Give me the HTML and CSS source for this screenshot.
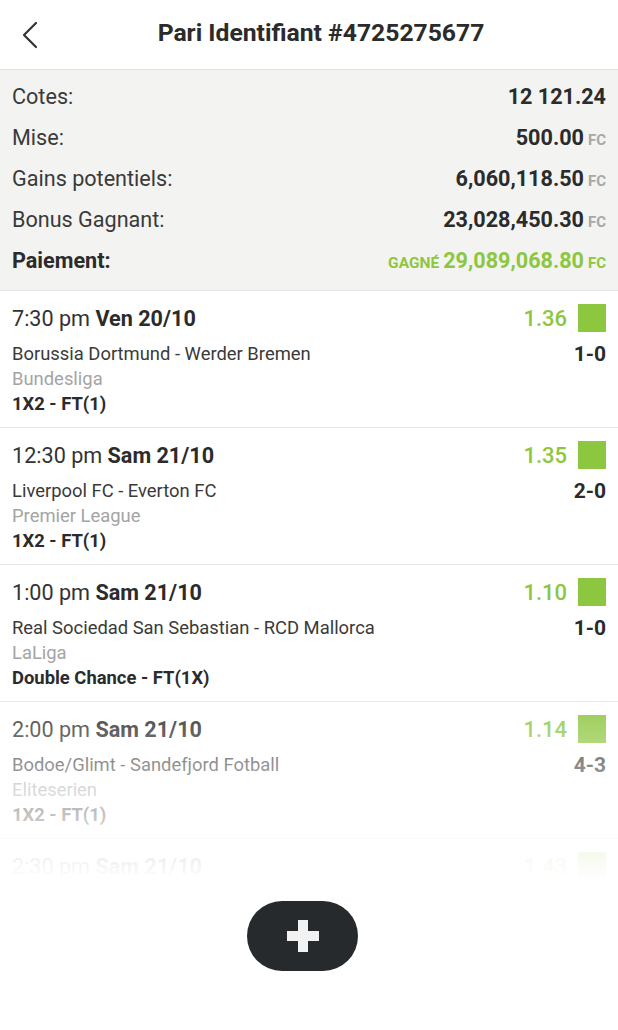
FILE: index.html
```html
<!DOCTYPE html>
<html lang="fr">
<head>
<meta charset="utf-8">
<title>Pari Identifiant</title>
<link rel="stylesheet" href="styles.css">
</head>
<body>
<div class="page">
  <header class="topbar">
    <button class="back" aria-label="Retour">
      <svg width="18" height="28" viewBox="0 0 18 28"><path d="M15 2 L3 14 L15 26" fill="none" stroke="#333" stroke-width="2.2" stroke-linecap="round" stroke-linejoin="round"/></svg>
    </button>
    <h1 class="title">Pari Identifiant #4725275677</h1>
  </header>

  <section class="summary">
    <div class="srow"><span class="slabel">Cotes:</span><span class="sval">12 121.24</span></div>
    <div class="srow"><span class="slabel">Mise:</span><span class="sval">500.00<span class="cur">FC</span></span></div>
    <div class="srow"><span class="slabel">Gains potentiels:</span><span class="sval">6,060,118.50<span class="cur">FC</span></span></div>
    <div class="srow"><span class="slabel">Bonus Gagnant:</span><span class="sval">23,028,450.30<span class="cur">FC</span></span></div>
    <div class="srow"><span class="slabel strong">Paiement:</span><span class="sval won"><span class="tag">GAGNÉ</span>29,089,068.80<span class="cur">FC</span></span></div>
  </section>

  <section class="list">
    <article class="bet">
      <div class="bet-top"><span class="when">7:30 pm <b>Ven 20/10</b></span><span class="odds">1.36<i class="dot"></i></span></div>
      <div class="line"><span class="teams">Borussia Dortmund - Werder Bremen</span><span class="score">1-0</span></div>
      <div class="line league">Bundesliga</div>
      <div class="line market">1X2 - FT(1)</div>
    </article>
    <article class="bet">
      <div class="bet-top"><span class="when">12:30 pm <b>Sam 21/10</b></span><span class="odds">1.35<i class="dot"></i></span></div>
      <div class="line"><span class="teams">Liverpool FC - Everton FC</span><span class="score">2-0</span></div>
      <div class="line league">Premier League</div>
      <div class="line market">1X2 - FT(1)</div>
    </article>
    <article class="bet">
      <div class="bet-top"><span class="when">1:00 pm <b>Sam 21/10</b></span><span class="odds">1.10<i class="dot"></i></span></div>
      <div class="line"><span class="teams">Real Sociedad San Sebastian - RCD Mallorca</span><span class="score">1-0</span></div>
      <div class="line league">LaLiga</div>
      <div class="line market">Double Chance - FT(1X)</div>
    </article>
    <article class="bet">
      <div class="bet-top"><span class="when">2:00 pm <b>Sam 21/10</b></span><span class="odds">1.14<i class="dot"></i></span></div>
      <div class="line"><span class="teams">Bodoe/Glimt - Sandefjord Fotball</span><span class="score">4-3</span></div>
      <div class="line league">Eliteserien</div>
      <div class="line market">1X2 - FT(1)</div>
    </article>
    <article class="bet last">
      <div class="bet-top"><span class="when">2:30 pm <b>Sam 21/10</b></span><span class="odds">1.43<i class="dot"></i></span></div>
    </article>
    <div class="fade"></div>
  </section>

  <footer class="foot">
    <button class="fab" aria-label="Ajouter">
      <svg width="32" height="32" viewBox="0 0 32 32"><rect x="11" y="0" width="10" height="32" fill="#f2f2f2"/><rect x="0" y="11" width="32" height="10" fill="#f2f2f2"/></svg>
    </button>
  </footer>
</div>
</body>
</html>
```

FILE: styles.css
```css
* { box-sizing: border-box; }
html, body { margin: 0; padding: 0; background: #fff; }
body { font-family: Roboto, "Noto Sans", Arial, sans-serif; color: #333; }

.page { width: 618px; height: 1030px; display: flex; flex-direction: column; overflow: hidden; }

.topbar {
  height: 70px;
  border-bottom: 1px solid #e2e2e0;
  display: flex;
  align-items: center;
  justify-content: center;
  padding-left: 24px;
  position: relative;
}
.back {
  position: absolute;
  left: 21px;
  top: 21px;
  background: none;
  border: 0;
  padding: 0;
  width: 18px;
  height: 28px;
}
.back svg { display: block; }
.title {
  margin: 0 0 4px 0;
  font-size: 24.7px;
  font-weight: 700;
  color: #2b2b2b;
}

.summary {
  background: #f3f3f1;
  padding: 6px 12px 9px 12px;
  border-bottom: 1px solid #e4e4e2;
}
.srow {
  height: 41px;
  display: flex;
  align-items: center;
  justify-content: space-between;
  font-size: 21.6px;
}
.slabel { color: #3a3a3a; }
.slabel.strong { font-weight: 700; color: #2b2b2b; }
.sval { font-weight: 700; color: #2b2b2b; display: flex; align-items: baseline; }
.cur { font-size: 15px; font-weight: 700; color: #a8a8a8; margin-left: 4px; }
.won { color: #8dc63f; }
.won .cur { color: #8dc63f; }
.tag { font-size: 15.5px; font-weight: 700; margin-right: 4px; }

.list { position: relative; height: 589px; overflow: hidden; }
.bet {
  height: 137px;
  padding: 11px 12px 0 12px;
  border-bottom: 1px solid #e6e6e6;
}
.bet.last { border-bottom: 0; }
.bet-top {
  height: 32px;
  display: flex;
  align-items: center;
  justify-content: space-between;
  margin-bottom: 7px;
}
.when { font-size: 21.6px; color: #333; }
.when b { font-weight: 700; color: #2b2b2b; }
.odds { display: flex; align-items: center; font-size: 22px; font-weight: 500; color: #8dc63f; }
.dot { display: block; width: 28px; height: 28px; background: #8dc63f; margin-left: 11px; }
.line {
  height: 25px;
  display: flex;
  align-items: center;
  justify-content: space-between;
  font-size: 18.4px;
  color: #3a3a3a;
}
.score { font-size: 21px; font-weight: 700; color: #2b2b2b; }
.league { color: #a4a4a4; }
.market { font-weight: 700; color: #2b2b2b; }

.fade {
  position: absolute;
  left: 0;
  right: 0;
  top: 395px;
  bottom: 0;
  background: linear-gradient(to bottom, rgba(255,255,255,0) 0%, rgba(255,255,255,0.6) 55%, rgba(255,255,255,0.9) 85%, #fff 100%);
}

.foot { flex: 1; display: flex; justify-content: center; padding: 21px 13px 0 0; }
.fab {
  width: 111px;
  height: 70px;
  border-radius: 35px;
  background: #262a2c;
  border: 0;
  display: flex;
  align-items: center;
  justify-content: center;
  padding: 0;
}
.fab svg { display: block; }
```
